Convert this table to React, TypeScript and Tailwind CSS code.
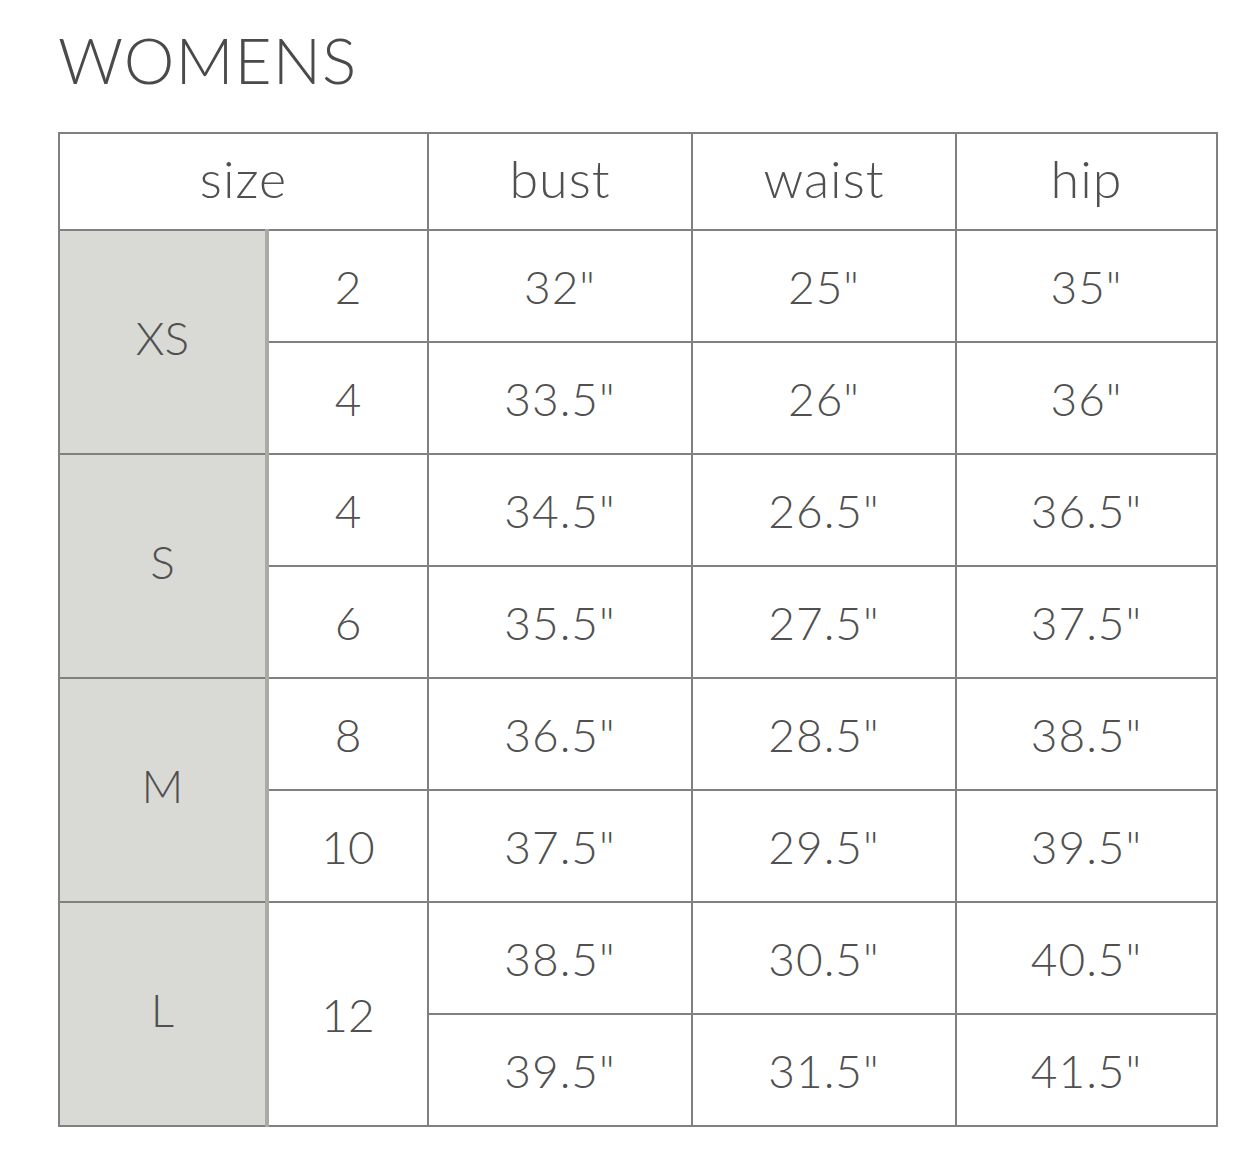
import React from "react";

const rows = [
  { label: "XS", sizes: ["2", "4"], data: [["32\"", "25\"", "35\""], ["33.5\"", "26\"", "36\""]] },
  { label: "S", sizes: ["4", "6"], data: [["34.5\"", "26.5\"", "36.5\""], ["35.5\"", "27.5\"", "37.5\""]] },
  { label: "M", sizes: ["8", "10"], data: [["36.5\"", "28.5\"", "38.5\""], ["37.5\"", "29.5\"", "39.5\""]] },
  { label: "L", sizes: ["12"], data: [["38.5\"", "30.5\"", "40.5\""], ["39.5\"", "31.5\"", "41.5\""]] },
];

const cell = "border-2 border-[#808080] text-center align-middle";

export default function App() {
  return (
    <div className="min-h-[1170px] w-[1260px] bg-white font-['Lato',sans-serif] font-light text-[#505050]">
      <div className="pl-[58px] pt-[22px]">
        <h1 className="text-[64px] leading-[76px] font-light tracking-[1px] text-[#4a4a4a]">WOMENS</h1>
        <table className="mt-[34px] table-fixed border-collapse text-[46px]">
          <colgroup>
            <col className="w-[208px]" />
            <col className="w-[161px]" />
            <col className="w-[264px]" />
            <col className="w-[264px]" />
            <col className="w-[261px]" />
          </colgroup>
          <thead>
            <tr className="h-[97px]">
              <th colSpan={2} className={`${cell} font-light text-[52px] pb-[8px] tracking-[1px]`}>size</th>
              <th className={`${cell} font-light text-[52px] pb-[8px] tracking-[1px]`}>bust</th>
              <th className={`${cell} font-light text-[52px] pb-[8px] tracking-[1px]`}>waist</th>
              <th className={`${cell} font-light text-[52px] pb-[8px] tracking-[1px]`}>hip</th>
            </tr>
          </thead>
          <tbody>
            {rows.map((r) =>
              r.data.map((d, i) => (
                <tr key={r.label + i} className="h-[112px]">
                  {i === 0 && (
                    <td rowSpan={2} className={`${cell} bg-[#d9d9d5] border-r-[4px] border-r-[#a9a9a6] pb-[10px]`}>
                      {r.label}
                    </td>
                  )}
                  {r.sizes.length === 2 ? (
                    <td className={cell}>{r.sizes[i]}</td>
                  ) : (
                    i === 0 && (
                      <td rowSpan={2} className={cell}>
                        {r.sizes[0]}
                      </td>
                    )
                  )}
                  {d.map((v, j) => (
                    <td key={j} className={`${cell} tracking-[1px]`}>
                      {v}
                    </td>
                  ))}
                </tr>
              ))
            )}
          </tbody>
        </table>
      </div>
    </div>
  );
}
